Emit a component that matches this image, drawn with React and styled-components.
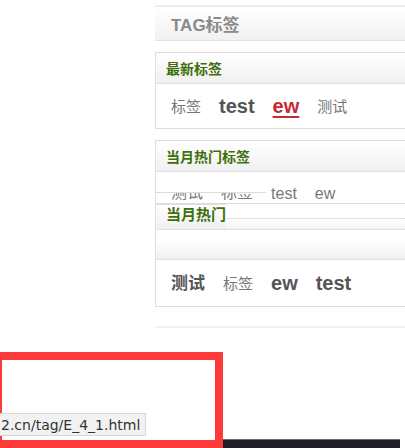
import styled, { createGlobalStyle } from 'styled-components'

const Global = createGlobalStyle`
  html, body {
    margin: 0;
    padding: 0;
    background: #fff;
    overflow: hidden;
  }
  body {
    font-family: 'Liberation Sans', 'Noto Sans CJK SC', sans-serif;
  }
`

const Page = styled.div`
  position: relative;
  width: 405px;
  height: 448px;
  overflow: hidden;
  background: #fff;
`

const Layout = styled.div`
  display: grid;
  grid-template-columns: 155px 260px;
`

const Sidebar = styled.div`
  display: flex;
  flex-direction: column;
  padding-top: 5px;
`

const TitleBar = styled.div`
  height: 33px;
  display: flex;
  align-items: center;
  padding-left: 16px;
  border-top: 2px solid #eeeeee;
  border-bottom: 1px solid #e3e3e3;
  background: linear-gradient(#ffffff, #f1f1f1);
  font-size: 17px;
  font-weight: bold;
  color: #8a8a8a;
`

const Panel = styled.div`
  margin-top: ${p => p.$gap || 0}px;
  border: 1px solid #dddddd;
  border-right: none;
  border-top: ${p => (p.$torn ? 'none' : '1px solid #dddddd')};
`

const PanelHead = styled.div`
  height: 30px;
  display: flex;
  align-items: center;
  padding-left: 10px;
  border-bottom: 1px solid #e0e0e0;
  background: linear-gradient(#ffffff, #f0f0f0);
  font-size: 14px;
  font-weight: bold;
  color: #3f6f0c;
`

const TagRow = styled.div`
  height: ${p => p.$h || 44}px;
  display: flex;
  align-items: center;
  gap: 18px;
  padding-left: 15px;
`

const Tag = styled.a`
  font-size: ${p => p.$size || (p.$big ? 20 : 15)}px;
  font-weight: ${p => (p.$big ? 'bold' : 'normal')};
  color: ${p => (p.$hot ? '#c42a34' : p.$big ? '#555' : '#777')};
  text-decoration: ${p => (p.$hot ? 'underline' : 'none')};
  text-underline-offset: 3px;
  line-height: 1;
  cursor: pointer;
`

const TornBody = styled.div`
  position: relative;
  height: 31px;
  display: flex;
  align-items: flex-end;
  gap: 18px;
  padding-left: 15px;
  font-size: 16px;
  color: #777;
  &::before {
    content: '';
    position: absolute;
    left: 0;
    top: 0;
    width: 110px;
    height: 20px;
    background: #fff;
    border-bottom: 1px solid #ddd;
    z-index: 1;
  }
`

const TornHead = styled.div`
  display: flex;
  align-items: stretch;
  height: 25px;
  border-bottom: 1px solid #e0e0e0;
`

const TornTitle = styled.div`
  width: 60px;
  padding-left: 10px;
  overflow: hidden;
  white-space: nowrap;
  font-size: 15px;
  font-weight: bold;
  color: #3f6f0c;
  line-height: 20px;
  border-top: 1px solid #dddddd;
  background: linear-gradient(#ffffff, #f0f0f0);
`

const TornRest = styled.div`
  flex: 1;
  margin-top: 14px;
  border-top: 1px solid #e2e2e2;
  background: linear-gradient(#ffffff, #f3f3f3);
`

const Smear = styled.div`
  height: 29px;
  border-bottom: 1px solid #e0e0e0;
  background: linear-gradient(#ffffff 40%, #efefef);
`

const FootLine = styled.div`
  margin-top: 19px;
  height: 2px;
  background: #eef6e8;
`

const RedFrame = styled.div`
  position: absolute;
  left: -6px;
  top: 352px;
  width: 213px;
  height: 80px;
  border: 8px solid #fc3a3a;
`

const StatusTip = styled.div`
  position: absolute;
  left: 0;
  top: 413px;
  width: 146px;
  height: 23px;
  display: flex;
  align-items: center;
  padding-left: 1px;
  box-sizing: border-box;
  background: #f2f2f2;
  border: 1px solid #d6d6d6;
  border-left: none;
  font-family: 'DejaVu Sans', 'Liberation Sans', sans-serif;
  font-size: 14px;
  color: #333;
  white-space: nowrap;
  overflow: hidden;
`

const Taskbar = styled.div`
  position: absolute;
  left: 223px;
  top: 439px;
  width: 177px;
  height: 9px;
  background: #1f1f25;
  border-top: 1px solid #6a6a70;
`

export default function App() {
  return (
    <Page>
      <Global />
      <Layout>
        <div />
        <Sidebar>
          <TitleBar>TAG标签</TitleBar>

          <Panel $gap={11}>
            <PanelHead>最新标签</PanelHead>
            <TagRow $h={44}>
              <Tag>标签</Tag>
              <Tag $big>test</Tag>
              <Tag $big $hot>ew</Tag>
              <Tag>测试</Tag>
            </TagRow>
          </Panel>

          <Panel $gap={11}>
            <PanelHead>当月热门标签</PanelHead>
            <TornBody>
              <span>测试</span>
              <span>标签</span>
              <span>test</span>
              <span>ew</span>
            </TornBody>
          </Panel>

          <Panel $torn>
            <TornHead>
              <TornTitle>当月热门</TornTitle>
              <TornRest />
            </TornHead>
            <Smear />
            <TagRow $h={46}>
              <Tag $big $size={17}>测试</Tag>
              <Tag>标签</Tag>
              <Tag $big>ew</Tag>
              <Tag $big>test</Tag>
            </TagRow>
          </Panel>

          <FootLine />
        </Sidebar>
      </Layout>

      <RedFrame />
      <StatusTip>2.cn/tag/E_4_1.html</StatusTip>
      <Taskbar />
    </Page>
  )
}
